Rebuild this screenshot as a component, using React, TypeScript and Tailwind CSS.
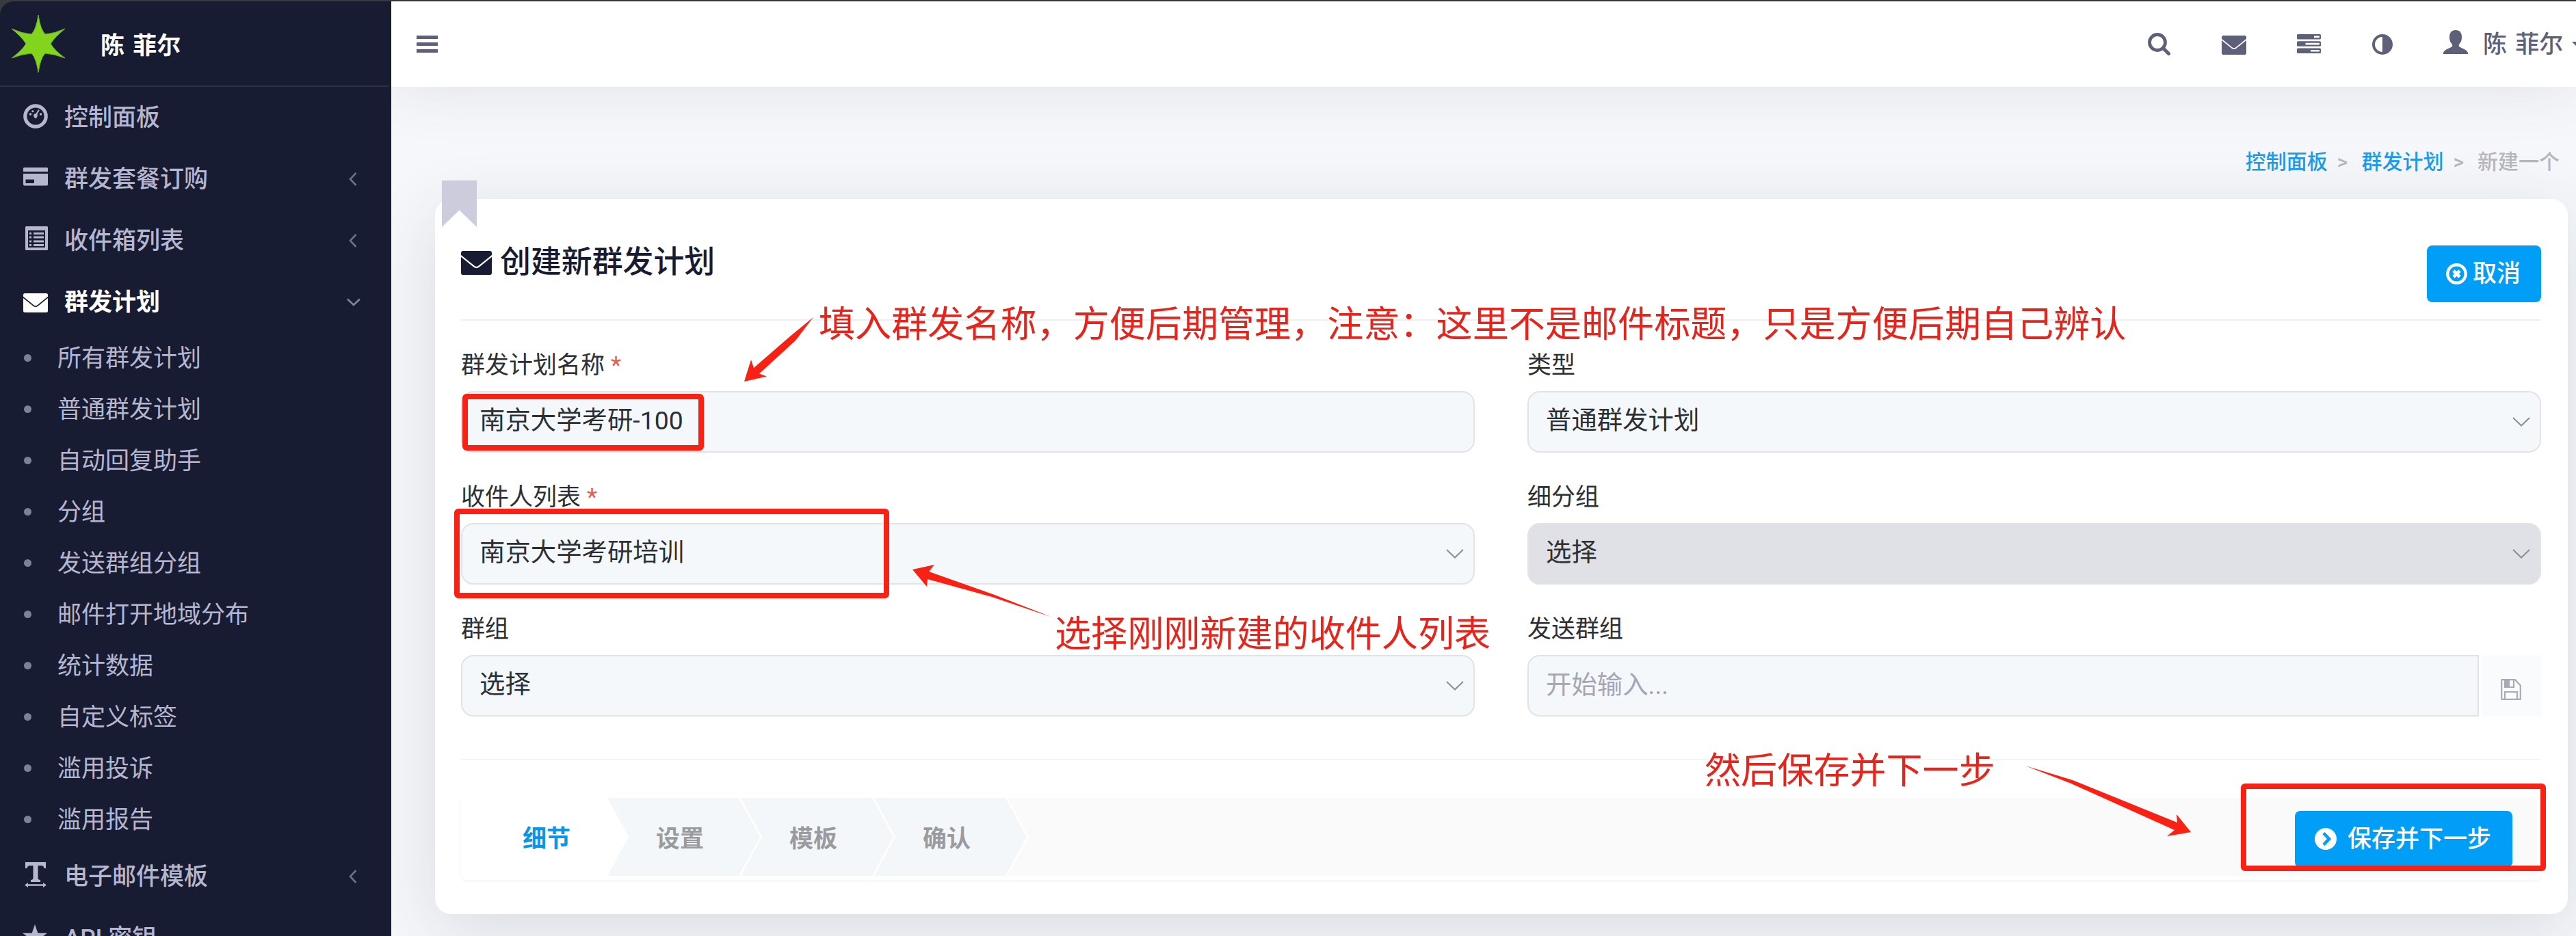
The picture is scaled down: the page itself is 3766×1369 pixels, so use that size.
import React from 'react';

interface IconProps {
  className?: string;
}

const EnvelopeIcon: React.FC<IconProps> = ({ className }) => (
  <svg viewBox="0 0 36 28" fill="currentColor" className={className}>
    <path d="M2.5 0H33.5Q36 0 36 2.5V4.8L20.6 17.2Q18 19.4 15.4 17.2L0 4.8V2.5Q0 0 2.5 0Z" />
    <path d="M0 7L14.6 18.8Q18 21.4 21.4 18.8L36 7V25.5Q36 28 33.5 28H2.5Q0 28 0 25.5Z" />
  </svg>
);

const DashboardIcon: React.FC<IconProps> = ({ className }) => (
  <svg viewBox="0 0 36 36" fill="currentColor" className={className}>
    <circle cx="18" cy="18" r="15.2" fill="none" stroke="currentColor" strokeWidth="5.2" />
    <circle cx="10.5" cy="15" r="1.7" />
    <circle cx="13.8" cy="10.8" r="1.5" />
    <circle cx="25.5" cy="15" r="1.7" />
    <circle cx="18" cy="17" r="2.8" />
    <path d="M18 17L22.5 9.5" stroke="currentColor" strokeWidth="2" strokeLinecap="round" />
    <path d="M18 17V21" stroke="currentColor" strokeWidth="3" />
  </svg>
);

const CardIcon: React.FC<IconProps> = ({ className }) => (
  <svg viewBox="0 0 36 27" fill="currentColor" className={className}>
    <path d="M1 0H35L36 1V6H0V1Z" />
    <path fillRule="evenodd" d="M0 9H36V25L35 26.5H1L0 25ZM3.5 17.5V23H16V17.5Z" />
  </svg>
);

const ListIcon: React.FC<IconProps> = ({ className }) => (
  <svg viewBox="0 0 33 35" fill="currentColor" className={className}>
    <path fillRule="evenodd" d="M1 0H32L33 1V34L32 35H1L0 34V1ZM4 6V31H29V6Z" />
    <path d="M6 9H9V12H6ZM12 9H27V12H12ZM6 14.5H9V17.5H6ZM12 14.5H27V17.5H12ZM6 20.5H9V23.5H6ZM12 20.5H27V23.5H12ZM6 26H9V29H6ZM12 26H27V29H12Z" />
  </svg>
);

const TextWidthIcon: React.FC<IconProps> = ({ className }) => (
  <svg viewBox="0 0 32 37" fill="currentColor" className={className}>
    <path d="M1 0H31V9H28.5Q28 5 24 5H19.5V23Q19.5 26 23 26V29H9V26Q12.5 26 12.5 23V5H8Q4 5 3.5 9H1Z" />
    <path d="M0 33.5L5 30V32.2H27V30L32 33.5L27 37V34.8H5V37Z" />
  </svg>
);

const StarIcon: React.FC<IconProps> = ({ className }) => (
  <svg viewBox="0 0 36 36" fill="currentColor" className={className}>
    <path d="M18 0L22.3 12.8H36L25 21L29 34L18 26L7 34L11 21L0 12.8H13.7Z" />
  </svg>
);

const SearchIcon: React.FC<IconProps> = ({ className }) => (
  <svg viewBox="0 0 34 34" fill="none" stroke="currentColor" className={className}>
    <circle cx="14" cy="14" r="11.5" strokeWidth="4.8" />
    <path d="M23.5 23.5L30.5 30.5" strokeWidth="5" strokeLinecap="round" />
  </svg>
);

const TasksIcon: React.FC<IconProps> = ({ className }) => (
  <svg viewBox="0 0 35 28" fill="currentColor" className={className}>
    <rect width="35" height="7.6" rx="1.5" />
    <rect y="10.2" width="35" height="7.6" rx="1.5" />
    <rect y="20.4" width="35" height="7.6" rx="1.5" />
    <path d="M25 2.6H33V5.2H25ZM12.5 12.8H33V15.4H12.5ZM20 23H33V25.6H20Z" fill="#fff" />
  </svg>
);

const ContrastIcon: React.FC<IconProps> = ({ className }) => (
  <svg viewBox="0 0 30 30" className={className}>
    <circle cx="15" cy="15" r="13" fill="none" stroke="currentColor" strokeWidth="4" />
    <path d="M15 1A14 14 0 0 1 15 29Z" fill="currentColor" />
  </svg>
);

const UserIcon: React.FC<IconProps> = ({ className }) => (
  <svg viewBox="0 0 36 35" fill="currentColor" className={className}>
    <path d="M18 0C24 0 27 4 27 10C27 15.5 25.5 18.5 22.8 21V23.5C22.8 25.5 34 27.5 36 33V35H0V33C2 27.5 13.2 25.5 13.2 23.5V21C10.5 18.5 9 15.5 9 10C9 4 12 0 18 0Z" />
  </svg>
);

const SaveIcon: React.FC<IconProps> = ({ className }) => (
  <svg viewBox="0 0 30 31" fill="none" stroke="currentColor" strokeWidth="2.2" className={className}>
    <path d="M1.2 1.2H21L28.8 9.5V29.8H1.2Z" strokeLinejoin="round" />
    <path d="M6 1.2V12H19V1.2M6 29.8V19H24V29.8" />
    <path d="M10 2V11" strokeWidth="6" />
  </svg>
);

const ChevronDown: React.FC<IconProps> = ({ className }) => (
  <svg viewBox="0 0 26 14" fill="none" stroke="currentColor" strokeWidth="2" className={className}>
    <path d="M1 1L13 12.5L25 1" />
  </svg>
);

const Logo: React.FC<IconProps> = ({ className }) => (
  <svg viewBox="0 0 80 86" className={className}>
    <path
      d="M40 1Q43 22 50 29Q64 28 79 21Q64 33 58 43Q64 53 79 64Q64 58 50 57Q43 64 40 85Q37 64 30 57Q16 58 1 64Q16 53 22 43Q16 33 1 21Q16 28 30 29Q37 22 40 1Z"
      fill="#82d41d"
      stroke="#6fb32a"
      strokeWidth="1"
      strokeLinejoin="round"
    />
  </svg>
);

interface NavItemProps {
  icon: React.ReactNode;
  label: string;
  active?: boolean;
  arrow?: boolean;
}

const NavItem: React.FC<NavItemProps> = ({ icon, label, active, arrow }) => (
  <li className={`flex h-[90px] items-center pl-[34px] pr-[50px] ${active ? 'font-bold text-white' : 'font-medium text-[#b5b6cf]'}`}>
    <span className="flex w-[60px] shrink-0 items-center">{icon}</span>
    <span>{label}</span>
    {arrow && !active && (
      <svg viewBox="0 0 12 20" fill="none" stroke="#6c7089" strokeWidth="2.6" className="ml-auto h-5 w-3">
        <path d="M10.5 1L2 10L10.5 19" />
      </svg>
    )}
    {arrow && active && (
      <svg viewBox="0 0 20 12" fill="none" stroke="#8084a0" strokeWidth="2.6" className="-mr-[5px] ml-auto h-3 w-5">
        <path d="M1 1.5L10 10L19 1.5" />
      </svg>
    )}
  </li>
);

const campaignLinks = [
  '所有群发计划',
  '普通群发计划',
  '自动回复助手',
  '分组',
  '发送群组分组',
  '邮件打开地域分布',
  '统计数据',
  '自定义标签',
  '滥用投诉',
  '滥用报告',
];

const Sidebar: React.FC = () => (
  <aside className="h-[1369px] w-[572px] shrink-0 overflow-hidden bg-[#373a3f]">
    <div className="mt-[2px] h-[1367px] rounded-tl-[20px] bg-[#181c32]">
      <div className="mr-1 flex h-[125px] items-center border-b-2 border-[#2b2f48] pl-4">
        <Logo className="h-[86px] w-[80px]" />
        <span className="ml-[51px] mt-[8px] font-bold text-white">陈&nbsp;&#8202;菲尔</span>
      </div>
      <ul>
        <NavItem icon={<DashboardIcon className="mb-1 h-9 w-9" />} label="控制面板" />
        <NavItem icon={<CardIcon className="mb-[7px] h-[27px] w-9" />} label="群发套餐订购" arrow />
        <NavItem icon={<ListIcon className="mb-[7px] ml-[3px] h-[35px] w-[33px]" />} label="收件箱列表" arrow />
        <NavItem icon={<EnvelopeIcon className="mt-[2px] h-7 w-9" />} label="群发计划" active arrow />
        {campaignLinks.map((label) => (
          <li key={label} className="flex h-[75px] items-center pl-[35px] text-[#b5b6cf]">
            <span className="mb-[2px] mr-[38px] h-[11px] w-[11px] rounded-full bg-[#7c819b]" />
            {label}
          </li>
        ))}
        <NavItem icon={<TextWidthIcon className="mb-[5px] ml-[2px] h-[37px] w-8" />} label="电子邮件模板" arrow />
        <NavItem icon={<StarIcon className="-ml-px mb-[5px] h-9 w-9" />} label="API 密钥" />
      </ul>
    </div>
  </aside>
);

const TopBar: React.FC = () => (
  <header className="relative z-10 flex h-[127px] items-center border-t-2 border-[#393637] bg-white text-[#5e6079] shadow-[0_0_90px_rgba(70,74,100,0.12)]">
    <div className="ml-[37px] flex w-[31px] flex-col gap-[5px]">
      <span className="h-[5px] bg-current" />
      <span className="h-[5px] bg-current" />
      <span className="h-[5px] bg-current" />
    </div>
    <div className="ml-auto flex w-[626px] items-center overflow-hidden">
      <SearchIcon className="h-[34px] w-[34px] shrink-0" />
      <EnvelopeIcon className="ml-[74px] mt-[2px] h-7 w-9 shrink-0" />
      <TasksIcon className="-mt-[2px] ml-[74px] h-7 w-[35px] shrink-0" />
      <ContrastIcon className="ml-[75px] h-[30px] w-[30px] shrink-0" />
      <UserIcon className="-mt-[6px] ml-[74px] h-[35px] w-9 shrink-0" />
      <span className="ml-[22px] mt-px w-[114px] shrink-0 whitespace-nowrap font-medium">陈&nbsp;&#8202;菲尔</span>
      <svg viewBox="0 0 18 10" fill="currentColor" className="ml-4 mt-[2px] h-[10px] w-[18px] shrink-0">
        <path d="M0 0H18L9 9Z" />
      </svg>
    </div>
  </header>
);

interface FieldProps {
  label: string;
  required?: boolean;
  children: React.ReactNode;
}

const Field: React.FC<FieldProps> = ({ label, required, children }) => (
  <div className="min-w-0">
    <label className="mb-3 flex h-[52px] items-center text-[#2b3034]">
      {label}
      {required && <span className="ml-[9px] text-[#e0604c]">*</span>}
    </label>
    {children}
  </div>
);

interface SelectBoxProps {
  value: string;
  disabled?: boolean;
}

const SelectBox: React.FC<SelectBoxProps> = ({ value, disabled }) => (
  <div className={`flex h-[90px] items-center justify-between rounded-[18px] border-2 border-[#e1e3e8] pl-[25px] pr-[14px] text-[37.4px] text-[#2b3034] ${disabled ? 'bg-[#dfe1e6]' : 'bg-[#f5f8fb]'}`}>
    <span className="-mt-[3px]">{value}</span>
    <ChevronDown className="h-[14px] w-[26px] text-[#8b8d93]" />
  </div>
);

const StepTabs: React.FC = () => (
  <div className="flex h-[114px]">
    <div className="relative z-40 flex w-[239px] items-center bg-white pl-[84px] pt-[6px] font-bold text-[#0a95e8] [clip-path:polygon(0_0,calc(100%-31px)_0,100%_50%,calc(100%-31px)_100%,0_100%)]">
      细节
    </div>
    {[
      { label: '设置', z: 'z-30' },
      { label: '模板', z: 'z-20' },
      { label: '确认', z: 'z-10' },
    ].map(({ label, z }) => (
      <div
        key={label}
        className={`relative -ml-[32px] w-[227px] bg-white pr-[3px] [clip-path:polygon(0_0,calc(100%-31px)_0,100%_50%,calc(100%-31px)_100%,0_100%)] ${z}`}
      >
        <div className="flex h-full items-center bg-[#f4f7fa] pl-[72px] pt-[6px] font-bold text-[#999b9e] [clip-path:polygon(0_0,calc(100%-31px)_0,100%_50%,calc(100%-31px)_100%,0_100%)]">
          {label}
        </div>
      </div>
    ))}
  </div>
);

const Annotations: React.FC = () => (
  <div className="pointer-events-none absolute inset-0 z-50 text-[53.1px] leading-[64px] text-[#e5251b]">
    <div className="absolute left-[676px] top-[576px] h-[83px] w-[353px] rounded-[6px] border-8 border-[#f92114]" />
    <div className="absolute left-[664px] top-[744px] h-[131px] w-[636px] rounded-[6px] border-8 border-[#f92114]" />
    <div className="absolute left-[3276px] top-[1146px] h-[128px] w-[446px] rounded-[6px] border-8 border-[#f92114]" />
    <svg viewBox="0 0 3766 1369" fill="#f92114" className="absolute inset-0 h-[1369px] w-[3766px]">
      <path d="M1189 464L1163 498L1110 546.5L1121 550.5L1088 558L1098 526L1102 538L1155 492Z" />
      <path d="M1536 902L1450 873L1356 847L1355 858L1334 833L1366 826L1358 836L1454 870Z" />
      <path d="M2961 1120L3030 1141L3183 1203L3182 1191L3203 1217L3168 1223L3179 1214L3028 1146Z" />
    </svg>
    <p className="absolute left-[1197px] top-[443px] whitespace-nowrap">
      填入群发名称，方便后期管理，注意：这里不是邮件标题，只是方便后期自己辨认
    </p>
    <p className="absolute left-[1542px] top-[896px] whitespace-nowrap">选择刚刚新建的收件人列表</p>
    <p className="absolute left-[2492px] top-[1096px] whitespace-nowrap">然后保存并下一步</p>
  </div>
);

export default function App() {
  return (
    <div className="relative flex h-[1369px] w-[3766px] overflow-hidden bg-[#f5f7fa] font-[Roboto,'Noto_Sans_CJK_SC',sans-serif] text-[35px] leading-[1.4]">
      <Sidebar />

      <main className="h-[1369px] min-w-0 flex-1 overflow-hidden">
        <TopBar />

        <div className="relative z-20 ml-16 mr-3">
          <nav className="mr-3 flex h-[164px] items-center justify-end pt-[56px] text-[30px] font-medium text-[#b5b7bd]">
            <span className="text-[#1d9cea]">控制面板</span>
            <span className="ml-[14px]">&gt;</span>
            <span className="ml-[20px] text-[#1d9cea]">群发计划</span>
            <span className="ml-[14px]">&gt;</span>
            <span className="ml-[20px]">新建一个</span>
          </nav>

          <section className="relative h-[1046px] rounded-[24px] bg-white pl-[38px] pr-[39px] shadow-[0_24px_100px_rgba(50,54,80,0.14)]">
            <div className="absolute -top-[27px] left-[10px] h-[68px] w-[51px] bg-[#ccccdd] [clip-path:polygon(0_0,100%_0,100%_100%,50%_64%,0_100%)]" />

            <div className="flex h-[178px] items-start justify-between border-b-2 border-[#eeeff1] pt-[68px]">
              <h1 className="flex h-[50px] items-center text-[44.9px] font-medium text-[#181c32]">
                <EnvelopeIcon className="h-[35px] w-[45px]" />
                <span className="ml-3">创建新群发计划</span>
              </h1>
              <button className="flex h-[83px] w-[167px] items-center rounded-lg bg-[#009ef7] pl-7 font-medium text-white">
                <svg viewBox="0 0 31 31" fill="none" stroke="currentColor" className="h-[31px] w-[31px]">
                  <circle cx="15.5" cy="15.5" r="13.2" strokeWidth="4.4" />
                  <path d="M11 11L20 20M20 11L11 20" strokeWidth="4.8" />
                </svg>
                <span className="ml-2">取消</span>
              </button>
            </div>

            <div className="grid grid-cols-2 gap-x-[77px] gap-y-[39px] pt-[39px]">
              <Field label="群发计划名称" required>
                <div className="flex h-[90px] items-center rounded-[18px] border-2 border-[#e1e3e8] bg-[#f5f8fb] pl-[25px] text-[37.4px] text-[#2b3034]">
                  <span className="-mt-[3px]">南京大学考研-100</span>
                </div>
              </Field>
              <Field label="类型">
                <SelectBox value="普通群发计划" />
              </Field>
              <Field label="收件人列表" required>
                <SelectBox value="南京大学考研培训" />
              </Field>
              <Field label="细分组">
                <SelectBox value="选择" disabled />
              </Field>
              <Field label="群组">
                <SelectBox value="选择" />
              </Field>
              <Field label="发送群组">
                <div className="flex h-[90px]">
                  <div className="flex flex-1 items-center rounded-l-[18px] border-2 border-[#e1e3e8] bg-[#f5f8fb] pl-[25px] text-[37.4px] text-[#a3a6b4]">
                    <span className="-mt-px">开始输入...</span>
                  </div>
                  <div className="ml-[5px] flex w-[86px] items-center justify-center bg-[#fafbfd] pr-[2px] text-[#a9a9b8]">
                    <SaveIcon className="mt-[10px] h-[31px] w-[30px]" />
                  </div>
                </div>
              </Field>
            </div>

            <div className="mt-[62px] h-[2px] bg-[#f4f5f6]" />

            <div className="mt-[49px] flex h-[126px] justify-between rounded-lg border-[6px] border-white bg-[#fafafa] shadow-[0_2px_5px_rgba(0,0,0,0.05)]">
              <StepTabs />
              <button className="mr-9 mt-[19px] flex h-[83px] w-[318px] items-center rounded-lg bg-[#009ef7] pl-[29px] font-medium text-white">
                <svg viewBox="0 0 32 32" className="mb-[2px] h-8 w-8">
                  <circle cx="16" cy="16" r="16" fill="#fff" />
                  <path d="M13 7.5L21 16L13 24.5" fill="none" stroke="#009ef7" strokeWidth="4.6" />
                </svg>
                <span className="ml-4">保存并下一步</span>
              </button>
            </div>
          </section>
        </div>
      </main>

      <Annotations />
    </div>
  );
}
